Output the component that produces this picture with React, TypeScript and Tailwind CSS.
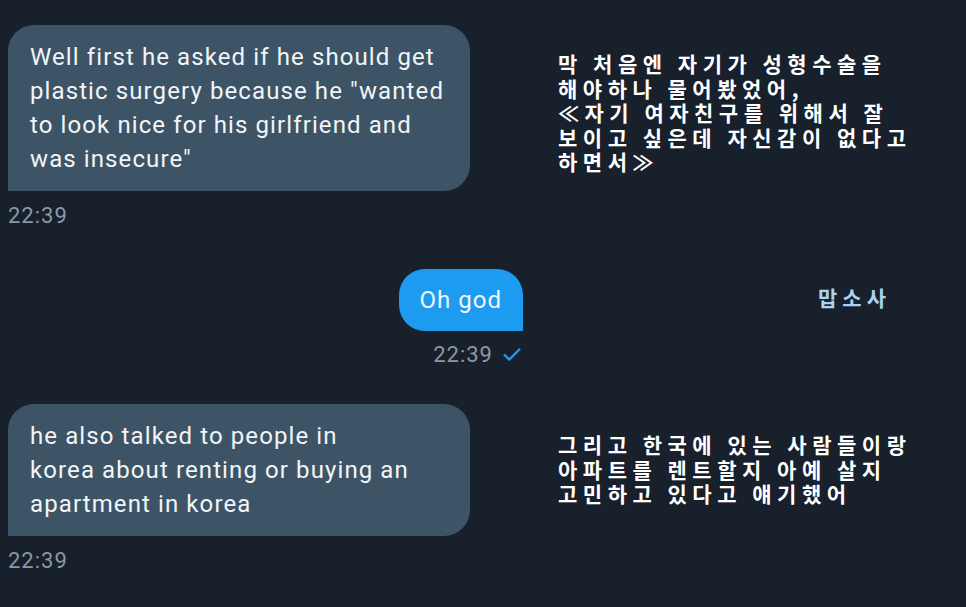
import { Check } from "lucide-react";

const en = { fontFamily: "Roboto, 'Noto Sans', sans-serif" };
const ko = { fontFamily: "'Noto Sans CJK KR', 'Noto Sans', sans-serif" };

function Lines({ lines }: { lines: string[] }) {
  return (
    <>
      {lines.map((l, i) => (
        <div key={i} className="whitespace-pre">
          {l}
        </div>
      ))}
    </>
  );
}

function Received({ lines }: { lines: string[] }) {
  return (
    <div className="ml-2 w-[462px]">
      <div
        className="rounded-[26px] rounded-bl-none bg-[#3d5467] px-[22px] py-[15px] text-[24px] leading-[34px] tracking-[1.1px] text-[#f2f5f7]"
        style={en}
      >
        <Lines lines={lines} />
      </div>
      <div className="mt-[12px] text-[22px] leading-[26px] tracking-[1px] text-[#8b98a5]" style={en}>
        22:39
      </div>
    </div>
  );
}

function Translation({ lines, className }: { lines: string[]; className?: string }) {
  return (
    <div
      className={`text-[21px] font-bold leading-[24.5px] tracking-[5.5px] text-white ${className ?? ""}`}
      style={ko}
    >
      <Lines lines={lines} />
    </div>
  );
}

export default function App() {
  return (
    <div className="h-[607px] w-[966px] overflow-hidden bg-[#17202b] pt-[25px]">
      <div className="grid grid-cols-[523px_1fr] gap-x-[35px]">
        <Received
          lines={[
            "Well first he asked if he should get",
            'plastic surgery because he "wanted',
            "to look nice for his girlfriend and",
            'was insecure"',
          ]}
        />
        <Translation
          className="mt-[26px]"
          lines={[
            "막 처음엔 자기가 성형수술을",
            "해야하나 물어봤었어,",
            "≪자기 여자친구를 위해서 잘",
            "보이고 싶은데 자신감이 없다고",
            "하면서≫",
          ]}
        />

        <div className="mt-[40px] flex flex-col items-end">
          <div
            className="rounded-[26px] rounded-br-none bg-[#1d9bf0] px-[21px] text-[24px] leading-[62px] tracking-[1px] text-[#eef7fe]"
            style={en}
          >
            Oh god
          </div>
          <div className="mt-[11px] flex items-center gap-[8px] text-[22px] leading-[26px] tracking-[1px] text-[#8b98a5]" style={en}>
            22:39
            <Check size={22} strokeWidth={2.6} className="text-[#1d9bf0]" />
          </div>
        </div>
        <div
          className="ml-[260px] mt-[53px] text-[21px] font-bold leading-[30px] tracking-[5px] text-[#a9d3f2]"
          style={ko}
        >
          맙소사
        </div>

        <div className="mt-[36px]">
          <Received
            lines={[
              "he also talked to people in",
              "korea about renting or buying an",
              "apartment in korea",
            ]}
          />
        </div>
        <Translation
          className="mt-[64px]"
          lines={[
            "그리고 한국에 있는 사람들이랑",
            "아파트를 렌트할지 아예 살지",
            "고민하고 있다고 얘기했어",
          ]}
        />
      </div>
    </div>
  );
}
